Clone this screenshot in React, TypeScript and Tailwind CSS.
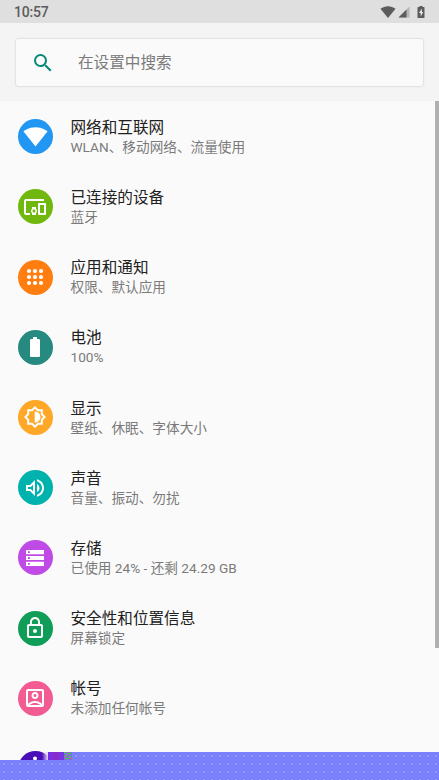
import type { ReactNode } from 'react';
import {
  MdBatteryFull,
  MdDevicesOther,
  MdLockOutline,
  MdOutlineAccountBox,
  MdOutlineVolumeUp,
  MdSearch,
  MdSignalWifi4Bar,
} from 'react-icons/md';

type SettingItem = {
  title: string;
  summary: string;
  color: string;
  icon: ReactNode;
};

const AppsIcon = () => (
  <svg width="24" height="24" viewBox="0 0 24 24" fill="currentColor">
    {[6, 12, 18].map((cy) =>
      [6, 12, 18].map((cx) => <circle key={`${cx}-${cy}`} cx={cx} cy={cy} r="2.1" />)
    )}
  </svg>
);

const DisplayIcon = () => (
  <svg width="24" height="24" viewBox="0 0 24 24">
    <path
      d="M12 2.4 14.9 5.2H18.8V9.1L21.6 12 18.8 14.9V18.8H14.9L12 21.6 9.1 18.8H5.2V14.9L2.4 12 5.2 9.1V5.2H9.1z"
      fill="none"
      stroke="currentColor"
      strokeWidth="2"
    />
    <path d="M11.7 6.5H12a5.5 5.5 0 0 1 0 11h-.3z" fill="currentColor" />
  </svg>
);

const StorageIcon = () => (
  <svg width="24" height="24" viewBox="0 0 24 24" fill="currentColor" fillRule="evenodd">
    <path d="M3 4h18v4.2H3zM5 5.2v1.8h1.8v-1.8z" />
    <path d="M3 9.9h18v4.2H3zM5 11.1v1.8h1.8v-1.8z" />
    <path d="M3 15.8h18V20H3zM5 17v1.8h1.8V17z" />
  </svg>
);

const InfoIcon = () => (
  <svg width="24" height="24" viewBox="0 0 24 24" fill="currentColor">
    <circle cx="12" cy="2.5" r="2" />
    <path d="M10.2 7h3.6v13h-3.6z" />
  </svg>
);

const items: SettingItem[] = [
  { title: '网络和互联网', summary: 'WLAN、移动网络、流量使用', color: 'bg-[#2196f3]', icon: <MdSignalWifi4Bar size={25} /> },
  { title: '已连接的设备', summary: '蓝牙', color: 'bg-[#70b70e]', icon: <MdDevicesOther size={24} /> },
  { title: '应用和通知', summary: '权限、默认应用', color: 'bg-[#ff7e0f]', icon: <AppsIcon /> },
  { title: '电池', summary: '100%', color: 'bg-[#268a80]', icon: <MdBatteryFull size={24} /> },
  { title: '显示', summary: '壁纸、休眠、字体大小', color: 'bg-[#ffa726]', icon: <DisplayIcon /> },
  { title: '声音', summary: '音量、振动、勿扰', color: 'bg-[#00b2ae]', icon: <MdOutlineVolumeUp size={24} /> },
  { title: '存储', summary: '已使用 24% - 还剩 24.29 GB', color: 'bg-[#c04ae6]', icon: <StorageIcon /> },
  { title: '安全性和位置信息', summary: '屏幕锁定', color: 'bg-[#109d58]', icon: <MdLockOutline size={24} /> },
  { title: '帐号', summary: '未添加任何帐号', color: 'bg-[#f25c92]', icon: <MdOutlineAccountBox size={24} /> },
  { title: '', summary: '', color: 'bg-[#4a0eb8]', icon: <InfoIcon /> },
];

const StatusBar = () => (
  <div className="flex h-[23px] shrink-0 items-center justify-between bg-[#dfdfdf] pr-[14px] pl-[14px] text-[#5c5c5c]">
    <span className="pt-px text-[14px] leading-4 font-medium tracking-[-0.2px]">10:57</span>
    <div className="flex items-center">
      <svg width="16" height="14" viewBox="0 0 16 14" fill="currentColor">
        <path d="M.5 3.8C4.8.4 11.2.4 15.5 3.8L8 13z" />
      </svg>
      <svg className="ml-[2px]" width="12" height="14" viewBox="0 0 12 14">
        <path d="M11.5 1.5v11H.5z" fill="#b5b5b5" />
        <path d="M8.5 4.5v8H.5z" fill="currentColor" />
      </svg>
      <svg className="ml-[7px]" width="8" height="14" viewBox="0 0 8 14">
        <path d="M2.5 1h3v1H7q.5 0 .5.5v10q0 .5-.5.5H1q-.5 0-.5-.5v-10Q.5 2 1 2h1.5z" fill="currentColor" />
        <path d="M4.8 3.5 2 8h1.7v3.5L6.2 7H4.8z" fill="#ededed" />
      </svg>
    </div>
  </div>
);

const SearchBar = () => (
  <div className="h-[78px] shrink-0 bg-[#f4f4f4] pt-4 pr-4 pl-[15.5px]">
    <div className="flex h-[47px] items-center rounded-[2px] bg-[#fafafa] pl-[15.5px] shadow-[0_0_2px_rgba(0,0,0,0.25)]">
      <MdSearch size={24} className="text-[#048879]" />
      <span className="ml-[23px] pt-[2px] text-[15.6px] text-[#7a7a7a]">在设置中搜索</span>
    </div>
  </div>
);

const SettingRow = ({ title, summary, color, icon }: SettingItem) => (
  <div className="flex h-[70.2px] shrink-0 items-center pl-[17.5px]">
    <div className={`flex size-[35px] items-center justify-center rounded-full text-white ${color}`}>
      {icon}
    </div>
    <div className="ml-[18px] flex flex-col pt-[1.4px]">
      <span className="text-[15.6px] leading-[20px] text-[#212121]">{title}</span>
      <span className="text-[13.65px] leading-[19px] text-[#7a7a7a]">{summary}</span>
    </div>
  </div>
);

const dots =
  'bg-[#7b80fc] bg-[radial-gradient(circle_at_center,#a3adff_0.6px,#666fea_1.2px,transparent_1.8px)] bg-[length:8px_8px]';

// Corrupted strip along the bottom edge of the screen
const GlitchStrip = () => (
  <div className="absolute inset-x-0 bottom-0">
    <div className="flex h-2">
      <div className="ml-[42px] w-[6px] bg-linear-to-r from-transparent to-[#e9d8fa]" />
      <div className="w-4 bg-linear-to-r from-[#6d30ed] via-[#8c28c8] to-[#6d38f0]" />
      <svg width="8" height="8" viewBox="0 0 8 8">
        <rect width="8" height="8" fill="#7678cf" />
        <path d="M0 .5h2M4 1.5h3M1 3.5h2M5 4.5h2M2 6.5h3" stroke="#3fd22c" />
        <path d="M2 2.5h2M0 5.5h2M6 6.5h2" stroke="#b76a9b" />
      </svg>
      <div className={`flex-1 ${dots}`} />
    </div>
    <div className={`h-5 ${dots}`} />
  </div>
);

const App = () => {
  return (
    <div className="relative flex h-[780px] w-[439px] flex-col overflow-hidden bg-[#fafafa] font-[Roboto,'Noto_Sans_CJK_SC',sans-serif]">
      <StatusBar />
      <SearchBar />
      <div className="flex min-h-0 flex-1 justify-between overflow-hidden">
        <div className="flex flex-col pt-[0.6px]">
          {items.map((item, index) => (
            <SettingRow key={index} {...item} />
          ))}
        </div>
        <div className="h-[547px] w-1 bg-[#b0b0b0]" />
      </div>
      <GlitchStrip />
    </div>
  );
};

export default App;
